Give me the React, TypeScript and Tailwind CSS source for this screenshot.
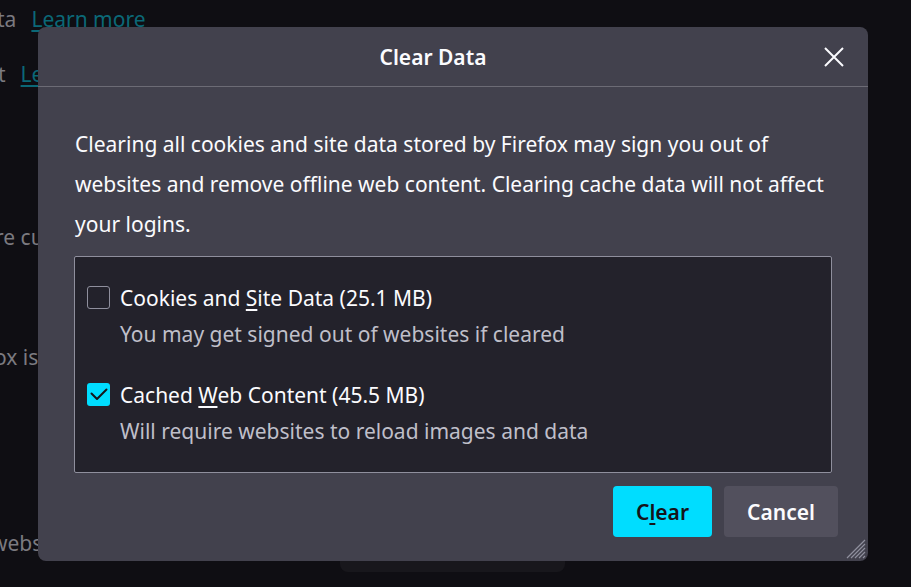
import React from 'react';

const font = { fontFamily: '"Noto Sans", "Open Sans", Arial, sans-serif' };

function CheckIcon() {
  return (
    <svg width="18" height="13" viewBox="0 0 18 13" fill="none">
      <path d="M1.5 5.5 L7 11 L16.5 1.5" stroke="#15141a" strokeWidth="2" strokeLinecap="round" strokeLinejoin="round" />
    </svg>
  );
}

function Option({ checked, label, hint }: { checked: boolean; label: React.ReactNode; hint: string }) {
  return (
    <div className="flex flex-col">
      <div className="flex items-center h-[36px]">
        {checked ? (
          <div className="w-[23px] h-[23px] rounded-[3px] bg-[#00ddff] flex items-center justify-center">
            <CheckIcon />
          </div>
        ) : (
          <div className="w-[23px] h-[23px] rounded-[3px] border border-[#8f8f9d]" />
        )}
        <span className="ml-[10px] text-[21px] text-[#fbfbfe] pt-[3px]">{label}</span>
      </div>
      <div className="pl-[33px] h-[36px] flex items-center text-[21px] text-[#bfbfc9] pt-[3px]">{hint}</div>
    </div>
  );
}

export default function App() {
  return (
    <div className="relative w-[911px] h-[587px] overflow-hidden bg-[#0f0e13]" style={font}>
      {/* page behind the dialog */}
      <div className="flex flex-col text-[21px] text-[#7b7a80] whitespace-nowrap">
        <div className="h-[40px] flex items-center -ml-[3px]">
          <span>ta</span>
          <span className="ml-[15px] text-[#0b6877] underline underline-offset-[3px]">Learn more</span>
        </div>
        <div className="h-[70px] flex items-center -ml-[2px]">
          <span>t</span>
          <span className="ml-[15px] text-[#0b6877] underline underline-offset-[3px]">Learn more</span>
        </div>
        <div className="h-[108px]" />
        <div className="h-[40px] flex items-center -ml-[5px]">re currently</div>
        <div className="h-[80px]" />
        <div className="h-[40px] flex items-center -ml-[6px]">ox is</div>
        <div className="h-[146px]" />
        <div className="h-[40px] flex items-center -ml-[9px]">webs</div>
      </div>
      <div className="absolute left-[340px] top-[540px] w-[225px] h-[32px] rounded-b-[8px] bg-[#18171c]" />

      {/* dialog */}
      <div className="absolute left-[38px] top-[27px] w-[830px] h-[534px] rounded-[8px] bg-[#42414d] flex flex-col">
        <div className="h-[60px] flex items-center border-b border-[#6c6b75]">
          <div className="flex-1 text-center text-[21px] font-semibold text-[#fbfbfe] pl-[24px] pt-[2px]">Clear Data</div>
          <button className="w-[60px] h-[60px] flex items-center justify-center mr-[4px]">
            <svg width="20" height="20" viewBox="0 0 20 20">
              <path d="M1 1 L19 19 M19 1 L1 19" stroke="#fbfbfe" strokeWidth="2" />
            </svg>
          </button>
        </div>
        <div className="flex-1 flex flex-col px-[36px] pt-[37px]">
          <p className="pl-[1px] text-[21px] leading-[40px] text-[#fbfbfe] whitespace-nowrap">
            Clearing all cookies and site data stored by Firefox may sign you out of
            <br />
            websites and remove offline web content. Clearing cache data will not affect
            <br />
            your logins.
          </p>
          <div className="mt-[12px] border border-[#8f8f9d] rounded-[2px] bg-[#23222b] pl-[12px] pt-[22px] pb-[24px] flex flex-col gap-[25px]">
            <Option
              checked={false}
              label={<>Cookies and <span className="underline underline-offset-[3px]">S</span>ite Data (25.1 MB)</>}
              hint="You may get signed out of websites if cleared"
            />
            <Option
              checked={true}
              label={<>Cached <span className="underline underline-offset-[3px]">W</span>eb Content (45.5 MB)</>}
              hint="Will require websites to reload images and data"
            />
          </div>
          <div className="mt-[13px] flex justify-end gap-[12px] -mr-[6px]">
            <button className="w-[99px] h-[51px] pt-[3px] rounded-[4px] bg-[#00ddff] text-[21px] font-semibold text-[#15141a]">
              C<span className="underline underline-offset-[3px]">l</span>ear
            </button>
            <button className="w-[114px] h-[51px] pt-[3px] rounded-[4px] bg-[#52505d] text-[21px] font-semibold text-[#fbfbfe]">
              Cancel
            </button>
          </div>
        </div>
        <svg className="absolute right-[2px] bottom-[2px]" width="22" height="22" viewBox="0 0 22 22">
          <path d="M21 3 L3 21 M21 7 L7 21 M21 11 L11 21 M21 15 L15 21 M21 19 L19 21" stroke="#8f8f9d" strokeWidth="1.2" />
        </svg>
      </div>
    </div>
  );
}
